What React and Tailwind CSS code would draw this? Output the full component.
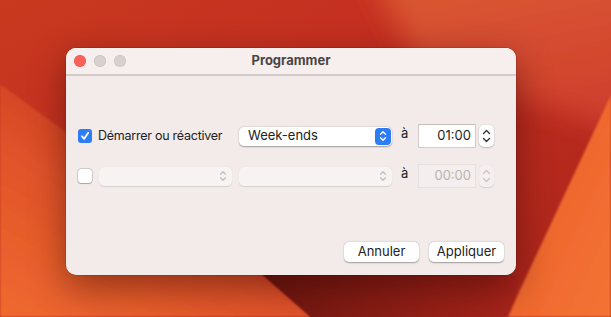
import React from 'react';

// macOS Ventura-ish wallpaper, drawn as shapes
const Wallpaper = () => (
  <svg className="absolute inset-0" width="611" height="317" viewBox="0 0 611 317">
    <defs>
      <linearGradient id="base" x1="0" y1="0" x2="1" y2="1">
        <stop offset="0" stopColor="#c8391f" />
        <stop offset="0.4" stopColor="#c42e21" />
        <stop offset="1" stopColor="#a82419" />
      </linearGradient>
      <linearGradient id="glow" x1="0" y1="0" x2="0.3" y2="1">
        <stop offset="0" stopColor="#dc5c32" />
        <stop offset="1" stopColor="#cf3f2e" />
      </linearGradient>
      <linearGradient id="left" x1="0" y1="1" x2="0.6" y2="0.2">
        <stop offset="0" stopColor="#ef6a2f" />
        <stop offset="0.6" stopColor="#e0522a" />
        <stop offset="1" stopColor="#c93a22" />
      </linearGradient>
      <linearGradient id="wedge" x1="0" y1="0" x2="1" y2="0">
        <stop offset="0" stopColor="#6e1710" />
        <stop offset="1" stopColor="#a8241a" />
      </linearGradient>
      <linearGradient id="right" x1="0" y1="0" x2="1" y2="1">
        <stop offset="0" stopColor="#ea5e2c" />
        <stop offset="1" stopColor="#f47332" />
      </linearGradient>
      <filter id="soft">
        <feGaussianBlur stdDeviation="1.2" />
      </filter>
      <filter id="haze">
        <feGaussianBlur stdDeviation="14" />
      </filter>
    </defs>
    <rect width="611" height="317" fill="url(#base)" />
    <polygon points="370,-30 640,-30 640,140 560,110 420,70" fill="url(#glow)" filter="url(#haze)" />
    <polygon points="262,275 520,275 510,317 310,317" fill="url(#wedge)" />
    <polygon points="0,84 262,275 310,317 0,317" fill="url(#left)" filter="url(#soft)" />
    <polygon points="611,95 520,290 508,317 611,317" fill="url(#right)" filter="url(#soft)" />
  </svg>
);

const Chevrons = ({ color = 'white', w = 8, h = 12 }) => (
  <svg width={w} height={h} viewBox="0 0 8 12" fill="none" stroke={color} strokeWidth="1.4" strokeLinecap="round" strokeLinejoin="round">
    <path d="M1.5 4.2 L4 1.7 L6.5 4.2" />
    <path d="M1.5 7.8 L4 10.3 L6.5 7.8" />
  </svg>
);

const PopUp = ({ label, width, active }) => (
  <div
    className={
      active
        ? 'flex items-center justify-between h-[19px] rounded-[5px] bg-white pl-[9px] pr-[1px] shadow-[0_0.5px_1.5px_rgba(0,0,0,0.35)]'
        : 'flex items-center justify-between h-[19px] rounded-[5px] bg-[#f7f3f2] pl-[9px] pr-[1px] shadow-[0_0.5px_1px_rgba(0,0,0,0.12)]'
    }
    style={{ width }}
  >
    <span className="text-[13px] text-[#222]">{label}</span>
    {active ? (
      <div className="flex items-center justify-center w-[16px] h-[17px] rounded-[4px] bg-[#2e7cf6]">
        <Chevrons />
      </div>
    ) : (
      <div className="flex items-center justify-center w-[16px] h-[17px]">
        <Chevrons color="#c4bfbd" />
      </div>
    )}
  </div>
);

const Stepper = ({ disabled }) => (
  <div
    className={
      disabled
        ? 'flex flex-col items-center justify-center gap-[2px] w-[15px] h-[22px] rounded-[5px] bg-[#f5f0ef] shadow-[0_0.5px_1px_rgba(0,0,0,0.12)]'
        : 'flex flex-col items-center justify-center gap-[2px] w-[15px] h-[22px] rounded-[5px] bg-white shadow-[0_0.5px_1.5px_rgba(0,0,0,0.35)]'
    }
  >
    <svg width="9" height="6" viewBox="0 0 9 6" fill="none" stroke={disabled ? '#cbc6c4' : '#333'} strokeWidth="1.4" strokeLinecap="round" strokeLinejoin="round">
      <path d="M1.5 4.5 L4.5 1.5 L7.5 4.5" />
    </svg>
    <svg width="9" height="6" viewBox="0 0 9 6" fill="none" stroke={disabled ? '#cbc6c4' : '#333'} strokeWidth="1.4" strokeLinecap="round" strokeLinejoin="round">
      <path d="M1.5 1.5 L4.5 4.5 L7.5 1.5" />
    </svg>
  </div>
);

const TimeField = ({ value, disabled }) => (
  <div
    className={
      disabled
        ? 'flex items-center justify-end w-[58px] h-[24px] pr-[4px] bg-[#f4efee] border border-[#e6e0de] text-[13px] text-[#b9b3b1]'
        : 'flex items-center justify-end w-[58px] h-[24px] pr-[4px] bg-white border border-[#d2cbc9] border-t-[#c4bdbb] text-[13px] text-[#1e1e1e]'
    }
  >
    {value}
  </div>
);

const Checkbox = ({ checked }) =>
  checked ? (
    <div className="flex items-center justify-center w-[14px] h-[14px] rounded-[3px] bg-[#2e7cf6]">
      <svg width="10" height="10" viewBox="0 0 10 10" fill="none" stroke="white" strokeWidth="1.8" strokeLinecap="round" strokeLinejoin="round">
        <path d="M2 5.3 L4.2 7.8 L8.2 1.8" />
      </svg>
    </div>
  ) : (
    <div className="w-[14px] h-[14px] rounded-[3px] bg-white shadow-[0_0_0_0.5px_rgba(0,0,0,0.25),0_0.5px_1px_rgba(0,0,0,0.2)]" />
  );

const Button = ({ children }) => (
  <button className="w-[75px] h-[20px] rounded-[5px] bg-white text-[13px] text-[#222] shadow-[0_0.5px_1.5px_rgba(0,0,0,0.35)]">
    {children}
  </button>
);

const App = () => {
  return (
    <div className="relative w-[611px] h-[317px] overflow-hidden" style={{ fontFamily: 'Inter, "Noto Sans", sans-serif' }}>
      <Wallpaper />
      <div className="relative ml-[66px] mt-[48px] w-[450px] h-[227px] rounded-[10px] bg-[#f2ebe9] shadow-[0_12px_36px_rgba(40,0,0,0.45),0_0_0_0.5px_rgba(0,0,0,0.2)] flex flex-col">
        {/* title bar */}
        <div className="flex items-center h-[28px] px-[8px] border-b-2 border-[#d3cbc9] bg-[#f6efed] rounded-t-[10px]">
          <div className="flex gap-[8px]">
            <div className="w-[12px] h-[12px] rounded-full bg-[#fe5f57] shadow-[inset_0_0_0_0.5px_rgba(0,0,0,0.15)]" />
            <div className="w-[12px] h-[12px] rounded-full bg-[#d6d0ce] shadow-[inset_0_0_0_0.5px_rgba(0,0,0,0.1)]" />
            <div className="w-[12px] h-[12px] rounded-full bg-[#d6d0ce] shadow-[inset_0_0_0_0.5px_rgba(0,0,0,0.1)]" />
          </div>
          <div className="flex-1 text-center pr-[52px] text-[13px] font-bold text-[#4a4544]">Programmer</div>
        </div>

        {/* rows */}
        <div className="flex flex-col gap-[16px] pt-[48px] pl-[12px]">
          <div className="flex items-center h-[24px]">
            <Checkbox checked />
            <span className="ml-[6px] w-[141px] text-[12.5px] tracking-[-0.25px] text-[#222]">Démarrer ou réactiver</span>
            <PopUp label="Week-ends" width={153} active />
            <span className="ml-[9px] w-[17px] text-[13px] text-[#222] -mt-[4px]">à</span>
            <TimeField value="01:00" />
            <div className="ml-[3px]">
              <Stepper />
            </div>
          </div>
          <div className="flex items-center h-[24px]">
            <Checkbox />
            <div className="ml-[7px]">
              <PopUp label="" width={133} />
            </div>
            <div className="ml-[7px]">
              <PopUp label="" width={153} />
            </div>
            <span className="ml-[9px] w-[17px] text-[13px] text-[#222] -mt-[4px]">à</span>
            <TimeField value="00:00" disabled />
            <div className="ml-[3px]">
              <Stepper disabled />
            </div>
          </div>
        </div>

        {/* buttons */}
        <div className="mt-auto flex justify-end gap-[10px] pr-[12px] pb-[13px]">
          <Button>Annuler</Button>
          <Button>Appliquer</Button>
        </div>
      </div>
    </div>
  );
};

export default App;
